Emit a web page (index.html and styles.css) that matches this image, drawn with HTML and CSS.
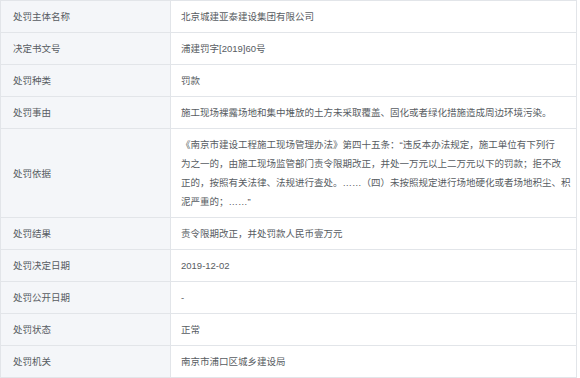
FILE: index.html
```
<!DOCTYPE html>
<html lang="zh-CN">
<head>
<meta charset="utf-8">
<link rel="stylesheet" href="styles.css">
</head>
<body>
<table class="info">
  <colgroup><col class="c-label"><col class="c-value"></colgroup>
  <tr><th>处罚主体名称</th><td>北京城建亚泰建设集团有限公司</td></tr>
  <tr><th>决定书文号</th><td>浦建罚字[2019]60号</td></tr>
  <tr><th>处罚种类</th><td>罚款</td></tr>
  <tr><th>处罚事由</th><td>施工现场裸露场地和集中堆放的土方未采取覆盖、固化或者绿化措施造成周边环境污染。</td></tr>
  <tr><th>处罚依据</th><td>《南京市建设工程施工现场管理办法》第四十五条：“违反本办法规定，施工单位有下列行<br>为之一的，由施工现场监管部门责令限期改正，并处一万元以上二万元以下的罚款；拒不改<br>正的，按照有关法律、法规进行查处。……（四）未按照规定进行场地硬化或者场地积尘、积<br>泥严重的；……”</td></tr>
  <tr><th>处罚结果</th><td>责令限期改正，并处罚款人民币壹万元</td></tr>
  <tr><th>处罚决定日期</th><td>2019-12-02</td></tr>
  <tr><th>处罚公开日期</th><td>-</td></tr>
  <tr><th>处罚状态</th><td>正常</td></tr>
  <tr><th>处罚机关</th><td>南京市浦口区城乡建设局</td></tr>
</table>
</body>
</html>
```
FILE: styles.css
```
html, body {
  margin: 0;
  padding: 0;
  background: #ffffff;
}
.info {
  border-collapse: collapse;
  width: 577px;
  table-layout: fixed;
  font-family: "Liberation Sans", "Noto Sans CJK SC", sans-serif;
  font-size: 9.5px;
  line-height: 19px;
  color: #575c62;
}
.c-label { width: 170px; }
.info th, .info td {
  border: 1px solid #e2e5e9;
  padding: 6px 8px 6px 10px;
  text-align: left;
  vertical-align: middle;
  font-weight: normal;
}
.info th {
  background: #f4f6f9;
  padding-left: 12px;
}
.info td {
  background: #ffffff;
  white-space: nowrap;
}
```
